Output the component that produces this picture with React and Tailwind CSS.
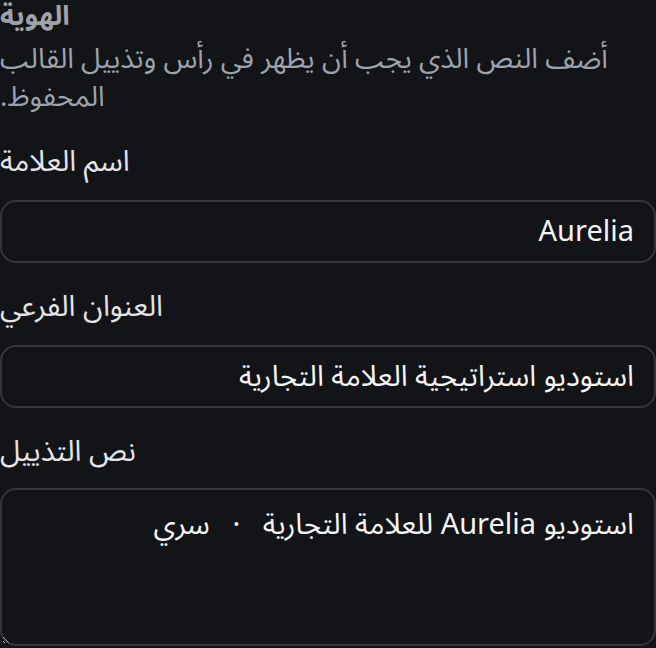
import React from "react";

const fieldClass =
  "w-full rounded-[16px] border-2 border-[#36373c] bg-[#131417] px-[20px] text-[29px] text-[#f4f4f5] outline-none";

const Field = ({ label, value }) => (
  <label className="flex flex-col">
    <span className="mb-[19px] text-left text-[29px] leading-[38px] text-[#e4e4e7]">{label}</span>
    <input className={`${fieldClass} h-[63px]`} defaultValue={value} />
  </label>
);

export default function App() {
  return (
    <div
      dir="rtl"
      className="min-h-screen w-full bg-[#131417] text-left"
      style={{ fontFamily: '"Noto Sans Arabic", "Noto Sans", "DejaVu Sans", sans-serif' }}
    >
      <div className="flex flex-col">
        <h2 className="mb-[7px] text-left text-[27px] font-bold leading-[34px] text-[#a1a1aa]">الهوية</h2>
        <p className="text-left text-[28px] leading-[38px] text-[#9ca3af]">
          أضف النص الذي يجب أن يظهر في رأس وتذييل القالب المحفوظ.
        </p>

        <div className="mt-[26px] flex flex-col gap-[25px]">
          <Field label="اسم العلامة" value="Aurelia" />
          <Field label="العنوان الفرعي" value="استوديو استراتيجية العلامة التجارية" />
          <label className="flex flex-col">
            <span className="mb-[17px] text-left text-[29px] leading-[38px] text-[#e4e4e7]">نص التذييل</span>
            <textarea
              className={`${fieldClass} h-[158px] py-[14px] leading-[42px]`}
              defaultValue="استوديو Aurelia للعلامة التجارية   ·   سري"
            />
          </label>
        </div>
      </div>
    </div>
  );
}
